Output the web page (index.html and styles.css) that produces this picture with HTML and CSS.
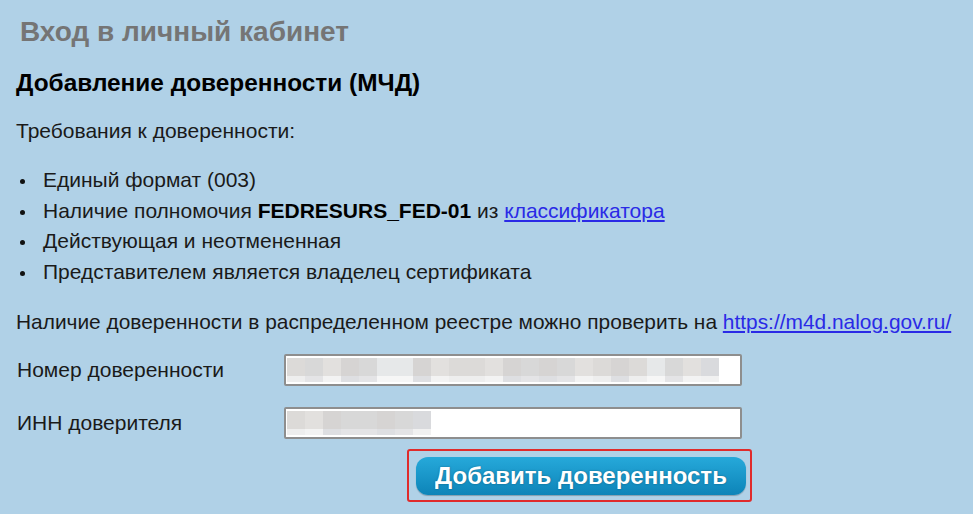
FILE: index.html
```html
<!DOCTYPE html>
<html lang="ru">
<head>
    <meta charset="UTF-8">
    <meta name="viewport" content="width=device-width, initial-scale=1.0">
    <title>Вход в личный кабинет</title>
    <link rel="stylesheet" href="styles.css">
</head>
<body>
    <h1 class="page-title">Вход в личный кабинет</h1>

    <!-- Добавление доверенности -->
    <div class="mchd">
        <h2>Добавление доверенности (МЧД)</h2>
        <p class="intro">Требования к доверенности:</p>
        <ul class="reqs">
            <li>Единый формат (003)</li>
            <li>Наличие полномочия <b>FEDRESURS_FED-01</b> из <a href="#">классификатора</a></li>
            <li>Действующая и неотмененная</li>
            <li>Представителем является владелец сертификата</li>
        </ul>
        <p class="check">Наличие доверенности в распределенном реестре можно проверить на <a href="#">https://m4d.nalog.gov.ru/</a></p>

        <div class="row">
            <label for="num">Номер доверенности</label>
            <div class="field" id="num">
                <div class="blur">
                    <span class="s1"></span><span class="s2"></span><span class="s3"></span><span class="s4"></span><span class="s2"></span><span class="s5"></span><span class="s5"></span><span class="s4"></span><span class="s3"></span><span class="s1"></span><span class="s1"></span><span class="s3"></span><span class="s4"></span><span class="s2"></span><span class="s4"></span><span class="s2"></span><span class="s3"></span><span class="s1"></span><span class="s4"></span><span class="s1"></span><span class="s5"></span><span class="s2"></span><span class="s3"></span><span class="s6"></span>
                </div>
            </div>
        </div>
        <div class="row">
            <label for="inn">ИНН доверителя</label>
            <div class="field" id="inn">
                <div class="blur">
                    <span class="s1"></span><span class="s3"></span><span class="s4"></span><span class="s2"></span><span class="s2"></span><span class="s4"></span><span class="s2"></span><span class="s6"></span>
                </div>
            </div>
        </div>

        <div class="actions">
            <div class="focus-box">
                <button class="btn">Добавить доверенность</button>
            </div>
        </div>
    </div>
</body>
</html>
```

FILE: styles.css
```css
body {
    margin: 0;
    padding: 0 16px;
    background-color: #b0d1e7;
    font-family: "Liberation Sans", Arial, sans-serif;
    color: #1a1a1a;
}
.page-title {
    margin: 0;
    padding: 16px 0 0 4px;
    font-size: 28px;
    line-height: 32px;
    color: #757575;
}
.mchd h2 {
    margin: 20px 0 0;
    font-size: 24.4px;
    line-height: 30px;
    color: #000;
}
.intro, .check {
    margin: 0;
    font-size: 21px;
    line-height: 26px;
}
.intro {
    margin-top: 20px;
}
.reqs {
    margin: 21px 0 0;
    padding-left: 27px;
    list-style: none;
    font-size: 21px;
    line-height: 30.5px;
}
.reqs li {
    position: relative;
}
.reqs li::before {
    content: "";
    position: absolute;
    left: -23px;
    top: 14px;
    width: 5px;
    height: 5px;
    border-radius: 50%;
    background: #111;
}
.reqs b {
    color: #000;
}
a {
    color: #2a2ae6;
}
.check {
    margin-top: 22px;
    font-size: 20.9px;
}
.row {
    display: flex;
    align-items: center;
    margin-top: 19px;
    font-size: 21px;
}
.row + .row {
    margin-top: 21px;
}
.row label {
    width: 267px;
    padding-left: 1px;
}
.field {
    width: 453px;
    height: 26px;
    background: #fff;
    border: 2px solid #8e8e8e;
    border-radius: 2px;
    padding: 2px 0 0 1px;
}
.blur {
    display: flex;
    height: 24px;
}
.blur span {
    width: 18px;
    height: 24px;
}
.s1 { background: linear-gradient(#dcdad8 75%, #eeeeee 75%); }
.s2 { background: linear-gradient(#d8d8d8 75%, #e4e4e6 75%); }
.s3 { background: linear-gradient(#e2e0de 75%, #f3f3f3 75%); }
.s4 { background: linear-gradient(#d6d4d3 75%, #dedfe2 75%); }
.s5 { background: linear-gradient(#e6e8e9 75%, #f6f6f6 75%); }
.s6 { background: linear-gradient(#d9dadd 75%, #f1f1f1 75%); }
.actions {
    display: flex;
    padding-left: 391px;
    margin-top: 10px;
}
.focus-box {
    border: 2px solid #e02b2b;
    border-radius: 3px;
    padding: 6px 4px 5px 7px;
}
.btn {
    width: 330px;
    height: 38px;
    border: none;
    border-radius: 12px;
    background: linear-gradient(#26a9da, #0d84b8);
    box-shadow: 0 1px 1px rgba(0, 0, 0, 0.25);
    color: #fff;
    font-family: "Liberation Sans", Arial, sans-serif;
    font-size: 24px;
    font-weight: bold;
    text-shadow: 0 0 2px rgba(0, 0, 0, 0.35);
}
```
